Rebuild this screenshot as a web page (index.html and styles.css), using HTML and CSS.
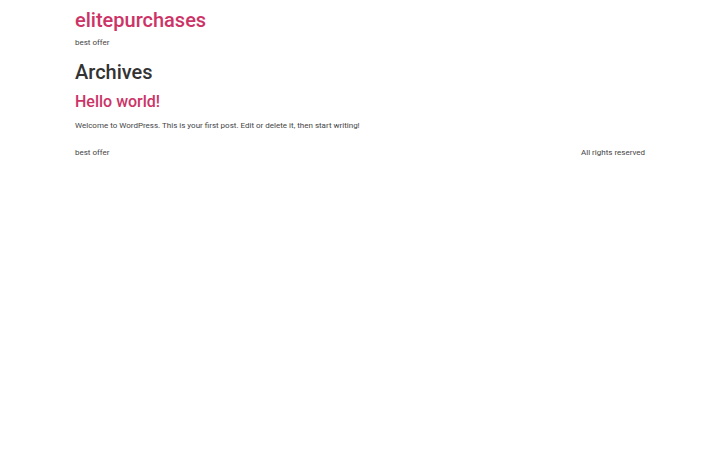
FILE: index.html
```html
<!DOCTYPE html>
<html lang="en">
<head>
<meta charset="utf-8">
<title>Archives – elitepurchases</title>
<link rel="stylesheet" href="styles.css">
</head>
<body>
<header class="site-header">
  <h1 class="site-title"><a href="#">elitepurchases</a></h1>
  <p class="site-description">best offer</p>
</header>
<main class="site-main">
  <h1 class="page-title">Archives</h1>
  <article class="post">
    <h2 class="entry-title"><a href="#">Hello world!</a></h2>
    <p class="entry-excerpt">Welcome to WordPress. This is your first post. Edit or delete it, then start writing!</p>
  </article>
</main>
<footer class="site-footer">
  <p class="footer-desc">best offer</p>
  <p class="footer-copy">All rights reserved</p>
</footer>
</body>
</html>
```

FILE: styles.css
```css
html, body {
  margin: 0;
  padding: 0;
  background: #fff;
}
body {
  font-family: Roboto, "Liberation Sans", sans-serif;
  font-size: 8px;
  line-height: 12px;
  color: #444;
}
a {
  color: #c36;
  text-decoration: none;
}
.site-header,
.site-main,
.site-footer {
  width: 570px;
  margin: 0 auto;
}
.site-header {
  padding-top: 8px;
}
.site-title {
  margin: 0;
  font-size: 20px;
  font-weight: 500;
  line-height: 24px;
}
.site-description {
  margin: 5px 0 0;
}
.page-title {
  margin: 11.4px 0 0;
  font-size: 20px;
  font-weight: 500;
  line-height: 24px;
  color: #333;
}
.entry-title {
  margin: 7.6px 0 0;
  font-size: 16px;
  font-weight: 500;
  line-height: 19.2px;
}
.entry-excerpt {
  margin: 8.8px 0 0;
}
.site-footer {
  display: flex;
  justify-content: space-between;
  margin-top: 15px;
}
.site-footer p {
  margin: 0;
}
```
